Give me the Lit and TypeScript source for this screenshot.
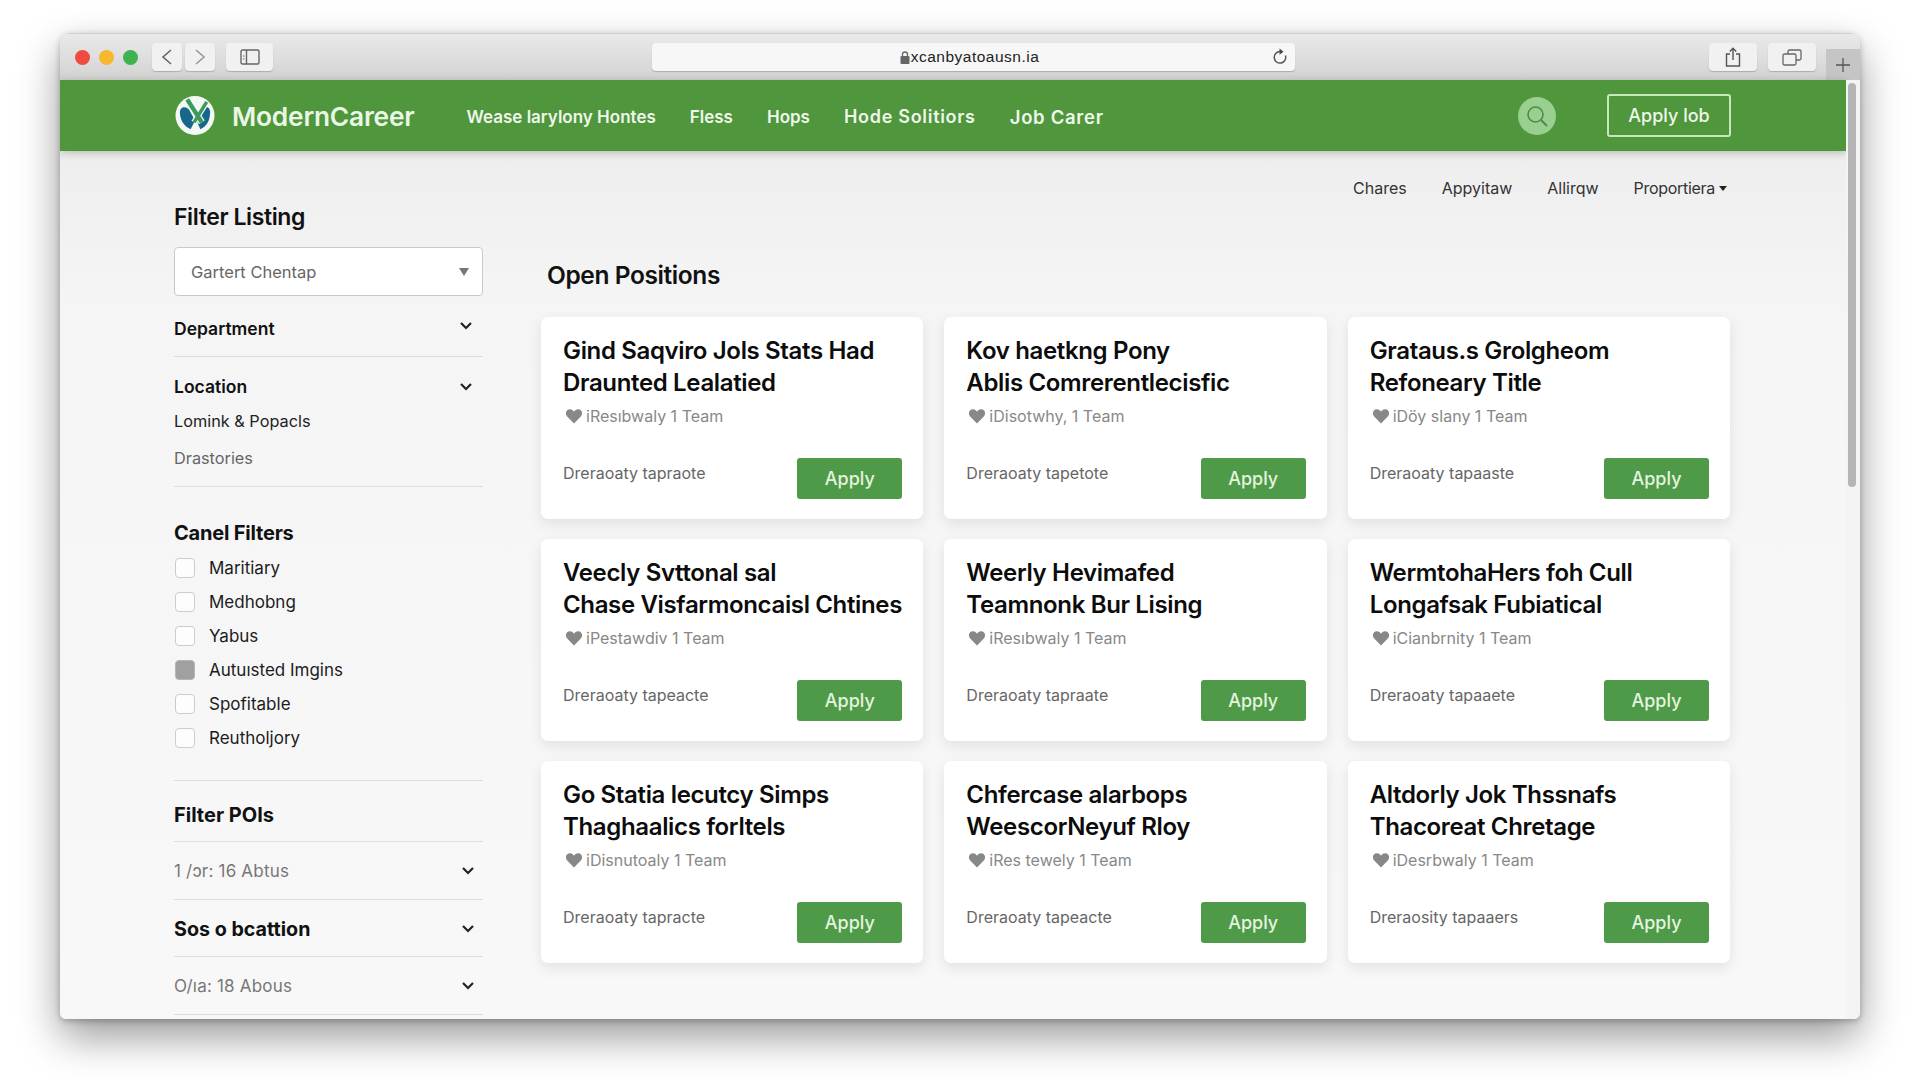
import { LitElement, css, html, svg } from "lit";
import { customElement } from "lit/decorators.js";

const chevron = html`<svg class="chev" viewBox="0 0 14 10" width="14" height="10"><path d="M2 2l5 5 5-5" fill="none" stroke="#222" stroke-width="2.2"/></svg>`;
const heart = html`<svg class="heart" viewBox="0 0 24 24" width="18" height="18"><path fill="#888" d="M12 22 2.6 12.2C-.4 8.8 1.6 3 6.600 3c2.500 0 4.200 1.300 5.400 3.200C13.200 4.300 14.900 3 17.400 3c5 0 7 5.800 4 9.200z"/></svg>`;

const cards = [
  ["Gind Saqviro Jols Stats Had", "Draunted Lealatied", "iResıbwaly 1 Team", "Dreraoaty tapraote"],
  ["Kov haetkng Pony", "Ablis Comrerentlecisfic", "iDisotwhy, 1 Team", "Dreraoaty tapetote"],
  ["Grataus.s Grolgheom", "Refoneary Title", "iDöy slany 1 Team", "Dreraoaty tapaaste"],
  ["Veecly Svttonal sal", "Chase Visfarmoncaisl Chtines", "iPestawdiv 1 Team", "Dreraoaty tapeacte"],
  ["Weerly Hevimafed", "Teamnonk Bur Lising", "iResıbwaly 1 Team", "Dreraoaty tapraate"],
  ["WermtohaHers foh Cull", "Longafsak Fubiatical", "iCianbrnity 1 Team", "Dreraoaty tapaaete"],
  ["Go Statia lecutcy Simps", "Thaghaalics forltels", "iDisnutoaly 1 Team", "Dreraoaty tapracte"],
  ["Chfercase alarbops", "WeescorNeyuf Rloy", "iRes tewely 1 Team", "Dreraoaty tapeacte"],
  ["Altdorly Jok Thssnafs", "Thacoreat Chretage", "iDesrbwaly 1 Team", "Dreraosity tapaaers"],
];

const checks = [
  ["Maritiary", false],
  ["Medhobng", false],
  ["Yabus", false],
  ["Autuısted Imgins", true],
  ["Spofitable", false],
  ["Reutholjory", false],
] as const;

const logoMark = svg`
  <circle cx="20" cy="20" r="20" fill="#f4f8f4"/>
  <path fill="#17678c" d="M4.500 17C4.500 10.500 11 10 14 14l6 11-4.500 9C9.500 32 4.500 25 4.500 17z"/>
  <path fill="#17678c" d="M35.500 17c0-6-5-7-8-4l-6 12 4 9c6-2 10-9 10-17z"/>
  <path d="M12 3.500 27 27" stroke="#f4f8f4" stroke-width="7"/>
  <path d="M32 6 19 27" stroke="#f4f8f4" stroke-width="6"/>
  <path d="M12 3.500 27 27" stroke="#3b9a5c" stroke-width="4.500"/>
  <path d="M32 6 19 27" stroke="#3b9a5c" stroke-width="3.500"/>`;

@customElement("app-root")
export class AppRoot extends LitElement {
  static styles = css`
    :host {
      display: block;
      box-sizing: border-box;
      width: 1920px;
      height: 1080px;
      padding: 33px 60px 0;
      background: #fff;
      overflow: hidden;
      font-family: Inter, "Liberation Sans", sans-serif;
      color: #111;
    }
    * { box-sizing: border-box; }

    .window {
      display: flex;
      flex-direction: column;
      height: 986px;
      border-radius: 10px 10px 6px 6px;
      overflow: hidden;
      background: #f6f6f7;
      box-shadow: 0 18px 42px rgba(0, 0, 0, .4), 0 2px 6px rgba(0, 0, 0, .25);
    }

    /* browser chrome */
    .toolbar {
      display: flex;
      height: 47px;
      flex: none;
      padding: 9px 0 0 15px;
      background: linear-gradient(#e9e9e9, #d2d3d1);
      border-top: 1px solid #cfcfcf;
    }
    .lights { display: flex; gap: 9px; height: 28px; align-items: center; }
    .lights i { width: 15px; height: 15px; border-radius: 50%; }
    .tb {
      display: flex;
      align-items: center;
      justify-content: center;
      height: 28px;
      background: #f1f1f1;
      border-radius: 4px;
      box-shadow: 0 1px 1px rgba(0, 0, 0, .2);
    }
    .back { width: 30px; margin-left: 14px; }
    .fwd { width: 30px; margin-left: 3px; }
    .side { width: 47px; margin-left: 11px; }
    .url {
      display: flex;
      position: relative;
      align-items: center;
      justify-content: center;
      gap: 1px;
      width: 643px;
      margin-left: 379px;
      padding-right: 8px;
      background: #f7f7f7;
      font: 15.500px "Liberation Sans", sans-serif;
      letter-spacing: .5px;
      color: #222;
    }
    .reload { position: absolute; right: 6px; top: 5px; }
    .share { width: 48px; margin-left: 414px; }
    .tabs { width: 48px; margin-left: 11px; }
    .plus {
      display: flex;
      align-items: center;
      justify-content: center;
      align-self: flex-end;
      width: 34px;
      height: 31px;
      margin-left: 10px;
      background: #c4c5c4;
    }

    .viewport { flex: 1; display: flex; min-height: 0; }
    .page { flex: 1; min-width: 0; display: flex; flex-direction: column; background: linear-gradient(#ebebec, #f5f5f6 230px, #f8f8f9); }
    .scroll { width: 14px; flex: none; padding: 3px 0 0 2px; background: #f4f4f4; }
    .scroll i { display: block; width: 8px; height: 404px; border-radius: 4px; background: #b4b4b6; }

    /* site header */
    header {
      display: flex;
      align-items: center;
      flex: none;
      height: 71px;
      padding: 0 115px;
      background: #4f963c;
      color: #eef7ea;
      box-shadow: 0 2px 8px rgba(0, 0, 0, .22);
    }
    .brand { margin: 2px 0 0 17px; font-size: 26.300px; font-weight: 600; color: #eaf6e6; letter-spacing: -.2px; }
    nav { display: flex; align-items: center; gap: 34px; margin: 2px 0 0 52px; font-size: 17px; font-weight: 600; }
    nav .wide { font-size: 18px; letter-spacing: .7px; }
    nav .wide:last-child { font-size: 18.500px; }
    .search {
      display: flex;
      align-items: center;
      justify-content: center;
      width: 38px;
      height: 38px;
      margin-left: auto;
      border-radius: 50%;
      background: #9ad08f;
    }
    .cta {
      display: flex;
      align-items: center;
      justify-content: center;
      width: 124px;
      height: 43px;
      margin-left: 51px;
      border: 2px solid #c4eabc;
      border-radius: 3px;
      font-size: 18px;
      font-weight: 500;
    }

    .body { flex: 1; min-height: 0; display: flex; gap: 58px; padding: 0 116px 0 114px; overflow: hidden; }

    /* filters */
    aside { width: 309px; flex: none; padding-top: 51px; }
    h2 { margin: 0; font-size: 23px; line-height: 30px; font-weight: 600; letter-spacing: -.4px; color: #111; }
    .select {
      display: flex;
      align-items: center;
      justify-content: space-between;
      height: 49px;
      margin-top: 15px;
      padding: 0 13px 0 16px;
      background: #fff;
      border: 1px solid #c9c9c9;
      border-radius: 4px;
      font-size: 16.500px;
      color: #666;
    }
    .select i { width: 0; height: 0; border: 5.500px solid transparent; border-top: 8px solid #777; border-bottom: 0; }
    .filter-head {
      display: flex;
      align-items: center;
      justify-content: space-between;
      height: 24px;
      padding-right: 10px;
      font-size: 17.500px;
      line-height: 24px;
      font-weight: 600;
    }
    .dept { height: 61px; padding-top: 21px; border-bottom: 1px solid #ddd; }
    .dept .filter-head { height: 24px; }
    .dept .chev { margin-top: -6px; }
    .loc { padding: 18px 0 16px; border-bottom: 1px solid #ddd; }
    .loc .opt { margin-top: 10px; font-size: 16.300px; line-height: 24px; color: #222; }
    .loc .opt.dim { margin-top: 13px; color: #666; }
    .canel { margin-top: 34px; padding-bottom: 32px; border-bottom: 1px solid #ddd; }
    .canel .filter-head { font-size: 20px; font-weight: 700; letter-spacing: -.2px; }
    .checks { display: flex; flex-direction: column; gap: 14px; margin-top: 13px; }
    .check { display: flex; align-items: center; gap: 14px; height: 20px; font-size: 17px; color: #1c1c1c; }
    .check i { width: 20px; height: 20px; margin-left: 1px; background: #fdfdfd; border: 1.500px solid #ccc; border-radius: 4px; }
    .check i.on { background: #a0a0a0; border-color: #b5b5b5; }
    .pois { height: 61px; padding-top: 22px; border-bottom: 1px solid #ddd; }
    .pois .filter-head { font-size: 20px; font-weight: 700; }
    .row {
      display: flex;
      align-items: center;
      justify-content: space-between;
      height: 57.500px;
      padding: 2px 8px 0 0;
      border-bottom: 1px solid #ddd;
      font-size: 17px;
      letter-spacing: .2px;
      color: #777;
    }
    .row b { font-size: 19.700px; font-weight: 700; letter-spacing: 0; color: #111; }

    /* listings */
    main { flex: 1; min-width: 0; padding-top: 26px; }
    .sub { display: flex; justify-content: flex-end; gap: 35px; padding-right: 3px; font-size: 16px; line-height: 22px; color: #333; }
    .sub .last { letter-spacing: -.3px; }
    .sub .caret { display: inline-block; width: 0; height: 0; margin: 0 0 3px 4px; border: 4px solid transparent; border-top: 5px solid #222; border-bottom: 0; }
    main h2 { margin: 61px 0 0 6px; font-size: 24.500px; }
    .grid {
      display: grid;
      grid-template-columns: repeat(3, minmax(0, 1fr));
      grid-auto-rows: 202px;
      gap: 20px 21px;
      margin-top: 27px;
    }
    .card {
      display: flex;
      flex-direction: column;
      padding: 18px 21px 20px 22px;
      background: #fff;
      border-radius: 7px;
      box-shadow: 0 5px 14px rgba(0, 0, 0, .09);
    }
    .card h3 { margin: 0; font-size: 24px; line-height: 31.500px; font-weight: 600; letter-spacing: -.35px; color: #0c0c0c; white-space: nowrap; }
    .meta { display: flex; align-items: center; gap: 3px; margin-top: 7px; padding-left: 2px; font-size: 16px; line-height: 22px; color: #888; white-space: nowrap; }
    .foot { display: flex; align-items: center; justify-content: space-between; margin-top: auto; }
    .foot span { margin-bottom: 11px; font-size: 16px; color: #666; }
    .apply {
      display: flex;
      align-items: center;
      justify-content: center;
      width: 105px;
      height: 41px;
      background: #4f9a48;
      border-radius: 3px;
      font-size: 18px;
      font-weight: 500;
      color: #e4f4df;
    }
  `;

  card (c: readonly string[]) {
    return html`
      <div class="card">
        <h3>${c[0]}<br>${c[1]}</h3>
        <div class="meta">${heart}${c[2]}</div>
        <div class="foot">
          <span>${c[3]}</span>
          <div class="apply">Apply</div>
        </div>
      </div>
    `;
  }

  render () {
    return html`
      <div class="window">
        <div class="toolbar">
          <div class="lights">
            <i style="background:#ee4b43"></i>
            <i style="background:#f5b82e"></i>
            <i style="background:#3fb14d"></i>
          </div>
          <div class="tb back"><svg width="14" height="20" viewBox="0 0 14 20"><path d="M11 3 3 10l8 7" fill="none" stroke="#666" stroke-width="1.600"/></svg></div>
          <div class="tb fwd"><svg width="14" height="20" viewBox="0 0 14 20"><path d="m3 3 8 7-8 7" fill="none" stroke="#999" stroke-width="1.600"/></svg></div>
          <div class="tb side"><svg width="20" height="16" viewBox="0 0 20 16"><rect x="1" y="1" width="18" height="14" rx="1.500" fill="none" stroke="#666" stroke-width="1.400"/><path d="M6.500 1v14" stroke="#666" stroke-width="1.400"/><path d="M3 7h1.500M3 10h1.500" stroke="#666"/></svg></div>
          <div class="tb url">
            <svg width="10" height="13" viewBox="0 0 10 13"><rect x="0.500" y="5" width="9" height="8" rx="1" fill="#666"/><path d="M2.500 5V3.500a2.500 2.500 0 0 1 5 0V5" fill="none" stroke="#666" stroke-width="1.300"/></svg>
            <span>xcanbyatoausn.ia</span>
            <svg class="reload" width="18" height="18" viewBox="0 0 18 18"><path d="M9 3.500a5.800 5.800 0 1 0 5.500 4" fill="none" stroke="#555" stroke-width="1.500"/><path d="M8.500 .5l4 3.200-4 3z" fill="#444"/></svg>
          </div>
          <div class="tb share"><svg width="16" height="20" viewBox="0 0 16 20"><path d="M5 7H1.500v12h13V7H11" fill="none" stroke="#555" stroke-width="1.400"/><path d="M8 13V1.500M4.800 4.500 8 1.200l3.200 3.300" fill="none" stroke="#555" stroke-width="1.400"/></svg></div>
          <div class="tb tabs"><svg width="20" height="17" viewBox="0 0 20 17"><rect x="1" y="5" width="13" height="11" rx="1.500" fill="none" stroke="#666" stroke-width="1.300"/><path d="M6 5V2.500A1.500 1.500 0 0 1 7.500 1h10A1.500 1.500 0 0 1 19 2.500v7a1.500 1.500 0 0 1-1.500 1.500H14" fill="none" stroke="#666" stroke-width="1.300"/></svg></div>
          <div class="plus"><svg width="14" height="14" viewBox="0 0 14 14"><path d="M7 0v14M0 7h14" stroke="#555" stroke-width="1.300"/></svg></div>
        </div>

        <div class="viewport">
          <div class="page">
            <header>
              <svg width="40" height="39" viewBox="0 0 40 40" fill="none">${logoMark}</svg>
              <span class="brand">ModernCareer</span>
              <nav>
                <span>Wease larylony Hontes</span>
                <span>Fless</span>
                <span>Hops</span>
                <span class="wide">Hode Solitiors</span>
                <span class="wide">Job Carer</span>
              </nav>
              <div class="search"><svg width="26" height="26" viewBox="0 0 26 26"><circle cx="11.500" cy="11.500" r="7.500" fill="none" stroke="#4d8a50" stroke-width="1.600"/><path d="m17 17 6 6" stroke="#4d8a50" stroke-width="2"/></svg></div>
              <div class="cta">Apply lob</div>
            </header>

            <div class="body">
              <aside>
                <h2>Filter Listing</h2>
                <div class="select">Gartert Chentap<i></i></div>
                <div class="dept"><div class="filter-head">Department ${chevron}</div></div>
                <div class="loc">
                  <div class="filter-head">Location ${chevron}</div>
                  <div class="opt">Lomink &amp; Popacls</div>
                  <div class="opt dim">Drastories</div>
                </div>
                <div class="canel">
                  <div class="filter-head">Canel Filters</div>
                  <div class="checks">
                    ${checks.map(([label, on]) => html`
                      <div class="check"><i class=${on ? "on" : ""}></i>${label}</div>
                    `)}
                  </div>
                </div>
                <div class="pois"><div class="filter-head">Filter POIs</div></div>
                <div class="row"><span>1 /ɔr: 16 Abtus</span>${chevron}</div>
                <div class="row"><b>Sos o bcattion</b>${chevron}</div>
                <div class="row"><span>O/ıa: 18 Abous</span>${chevron}</div>
              </aside>

              <main>
                <div class="sub">
                  <span>Chares</span>
                  <span>Appyitaw</span>
                  <span>Allirqw</span>
                  <span class="last">Proportiera<i class="caret"></i></span>
                </div>
                <h2>Open Positions</h2>
                <div class="grid">${cards.map((c) => this.card(c))}</div>
              </main>
            </div>
          </div>
          <div class="scroll"><i></i></div>
        </div>
      </div>
    `;
  }
}
